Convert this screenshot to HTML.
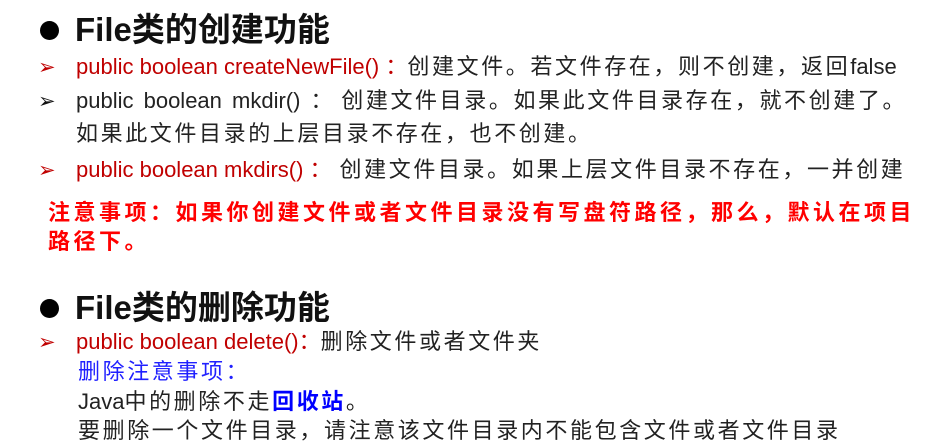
<!DOCTYPE html><html><head><meta charset="utf-8"><style>
body{margin:0;width:939px;height:446px;background:#fff;position:relative;overflow:hidden;font-family:"Liberation Sans","Noto Sans CJK SC",sans-serif;}
.l{position:absolute;white-space:nowrap;font-size:22px;color:#222;line-height:26px}
.c{letter-spacing:2.6px}
.r{color:#c00000}
.h{font-size:33px;font-weight:bold;color:#111;line-height:36px}
.dot{position:absolute;width:19px;height:19px;border-radius:50%;background:#000}
.ar{position:absolute;font-size:21px;line-height:22px}
.b{color:#f00;font-weight:bold;font-size:22px;letter-spacing:3.5px}
</style></head><body>
<div class="dot" style="left:40px;top:21px"></div>
<div class="l h" style="left:75px;top:12px">File类的创建功能</div>
<div class="ar" style="left:38px;top:57px;color:#c00000">➢</div>
<div class="l" style="left:76px;top:54px"><span class="r">public boolean createNewFile() ：</span><span class="c">创建文件。若文件存在，则不创建，返回</span>false</div>
<div class="ar" style="left:38px;top:91px;color:#111">➢</div>
<div class="l" style="left:76px;top:88px;word-spacing:4px">public boolean mkdir() ：<span class="c" style="word-spacing:0"> 创建文件目录。如果此文件目录存在，就不创建了。</span></div>
<div class="l c" style="left:76px;top:121px">如果此文件目录的上层目录不存在，也不创建。</div>
<div class="ar" style="left:38px;top:160px;color:#c00000">➢</div>
<div class="l" style="left:76px;top:157px"><span class="r">public boolean mkdirs() ：</span><span class="c" style="margin-left:8px">创建文件目录。如果上层文件目录不存在，一并创建</span></div>
<div class="l b" style="left:48px;top:200px">注意事项：如果你创建文件或者文件目录没有写盘符路径，那么，默认在项目</div>
<div class="l b" style="left:48px;top:229px">路径下。</div>
<div class="dot" style="left:40px;top:299px"></div>
<div class="l h" style="left:75px;top:290px">File类的删除功能</div>
<div class="ar" style="left:38px;top:332px;color:#c00000">➢</div>
<div class="l" style="left:76px;top:329px"><span class="r">public boolean delete()：</span><span class="c">删除文件或者文件夹</span></div>
<div class="l c" style="left:78px;top:359px;color:#2020ff">删除注意事项：</div>
<div class="l" style="left:78px;top:389px">Java<span class="c">中的删除不走<b style="color:#0000ff">回收站</b>。</span></div>
<div class="l c" style="left:78px;top:418px">要删除一个文件目录，请注意该文件目录内不能包含文件或者文件目录</div>
</body></html>
